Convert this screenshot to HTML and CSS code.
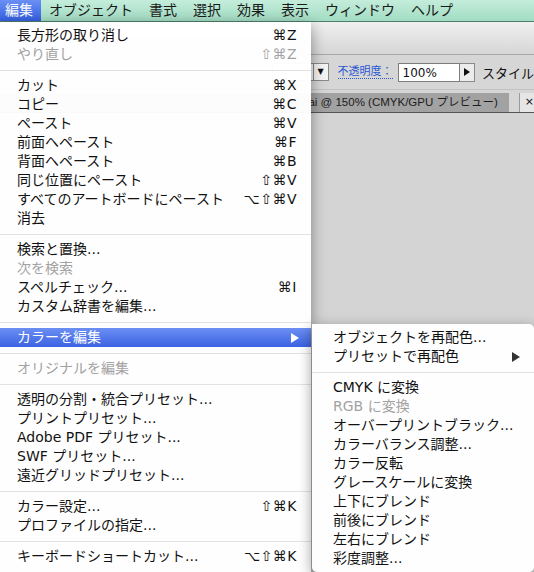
FILE: index.html
```html
<!DOCTYPE html>
<html>
<head>
    <title>編集メニュー</title>
    <link rel="stylesheet" href="styles.css">
</head>
<body>
    <div class="menubar">
        <span class="menubar-item is-open">編集</span>
        <span class="menubar-item">オブジェクト</span>
        <span class="menubar-item">書式</span>
        <span class="menubar-item">選択</span>
        <span class="menubar-item">効果</span>
        <span class="menubar-item">表示</span>
        <span class="menubar-item">ウィンドウ</span>
        <span class="menubar-item">ヘルプ</span>
    </div>

    <div class="app">
        <div class="titlebar"></div>
        <div class="controlbar">
            <span class="select"><span class="select-arrow">▼</span></span>
            <span class="opacity-label">不透明度：</span>
            <span class="field">100%</span>
            <span class="field-btn">
                <svg width="6" height="8" viewBox="0 0 6 8"><polygon points="0,0 6,4 0,8" fill="#111"/></svg>
            </span>
            <span class="style-label">スタイル</span>
        </div>
        <div class="tabbar">
            <span class="tab">ai @ 150% (CMYK/GPU プレビュー)</span>
            <span class="tab-close">×</span>
        </div>
        <div class="canvas"></div>
    </div>

    <!-- edit menu -->
    <div class="menu menu-edit">
        <div class="menu-item"><span>長方形の取り消し</span><span class="key">⌘Z</span></div>
        <div class="menu-item is-disabled"><span>やり直し</span><span class="key">⇧⌘Z</span></div>
        <div class="menu-sep"></div>
        <div class="menu-item"><span>カット</span><span class="key">⌘X</span></div>
        <div class="menu-item"><span>コピー</span><span class="key">⌘C</span></div>
        <div class="menu-item"><span>ペースト</span><span class="key">⌘V</span></div>
        <div class="menu-item"><span>前面へペースト</span><span class="key">⌘F</span></div>
        <div class="menu-item"><span>背面へペースト</span><span class="key">⌘B</span></div>
        <div class="menu-item"><span>同じ位置にペースト</span><span class="key">⇧⌘V</span></div>
        <div class="menu-item"><span>すべてのアートボードにペースト</span><span class="key">⌥⇧⌘V</span></div>
        <div class="menu-item"><span>消去</span></div>
        <div class="menu-sep"></div>
        <div class="menu-item"><span>検索と置換...</span></div>
        <div class="menu-item is-disabled"><span>次を検索</span></div>
        <div class="menu-item"><span>スペルチェック...</span><span class="key">⌘I</span></div>
        <div class="menu-item"><span>カスタム辞書を編集...</span></div>
        <div class="menu-sep"></div>
        <div class="menu-item is-active">
            <span>カラーを編集</span>
            <svg class="arrow" width="8" height="10" viewBox="0 0 8 10"><polygon points="0,0 8,5 0,10" fill="#fff"/></svg>
        </div>
        <div class="menu-sep"></div>
        <div class="menu-item is-disabled"><span>オリジナルを編集</span></div>
        <div class="menu-sep"></div>
        <div class="menu-item"><span>透明の分割・統合プリセット...</span></div>
        <div class="menu-item"><span>プリントプリセット...</span></div>
        <div class="menu-item"><span>Adobe PDF プリセット...</span></div>
        <div class="menu-item"><span>SWF プリセット...</span></div>
        <div class="menu-item"><span>遠近グリッドプリセット...</span></div>
        <div class="menu-sep"></div>
        <div class="menu-item"><span>カラー設定...</span><span class="key">⇧⌘K</span></div>
        <div class="menu-item"><span>プロファイルの指定...</span></div>
        <div class="menu-sep"></div>
        <div class="menu-item"><span>キーボードショートカット...</span><span class="key">⌥⇧⌘K</span></div>
    </div>

    <!-- color submenu -->
    <div class="menu submenu">
        <div class="menu-item"><span>オブジェクトを再配色...</span></div>
        <div class="menu-item">
            <span>プリセットで再配色</span>
            <svg class="arrow" width="8" height="10" viewBox="0 0 8 10"><polygon points="0,0 8,5 0,10" fill="#333"/></svg>
        </div>
        <div class="menu-sep"></div>
        <div class="menu-item"><span>CMYK に変換</span></div>
        <div class="menu-item is-disabled"><span>RGB に変換</span></div>
        <div class="menu-item"><span>オーバープリントブラック...</span></div>
        <div class="menu-item"><span>カラーバランス調整...</span></div>
        <div class="menu-item"><span>カラー反転</span></div>
        <div class="menu-item"><span>グレースケールに変換</span></div>
        <div class="menu-item"><span>上下にブレンド</span></div>
        <div class="menu-item"><span>前後にブレンド</span></div>
        <div class="menu-item"><span>左右にブレンド</span></div>
        <div class="menu-item"><span>彩度調整...</span></div>
    </div>
</body>
</html>
```

FILE: styles.css
```css
body {
    margin: 0;
    font-family: "DejaVu Sans", "Noto Sans CJK JP", sans-serif;
    font-size: 14px;
    color: #111;
    background: #d4d4d4;
    overflow: hidden;
    height: 572px;
}
.menubar {
    display: flex;
    height: 21px;
    line-height: 21px;
    background: linear-gradient(#c4eddb, #a2dcc3);
    border-bottom: 1px solid #4f7f6a;
}
.menubar-item {
    padding: 0 8px;
    color: #1a1a1a;
}
.menubar-item.is-open {
    padding-left: 5px;
    color: #fff;
    background: linear-gradient(#6a8ff4, #3560e2);
}

/* application window behind the menus */
.app {
    display: flex;
    flex-direction: column;
}
.titlebar {
    height: 32px;
    background: linear-gradient(#f0f0f0, #d6d6d6);
    border-bottom: 1px solid #a9a9a9;
}
.controlbar {
    display: flex;
    align-items: center;
    height: 34px;
    padding-left: 272px;
    background: #d6d6d6;
    border-bottom: 1px solid #c2c2c2;
    white-space: nowrap;
}
.select {
    display: flex;
    justify-content: flex-end;
    align-items: center;
    width: 60px;
    height: 18px;
    box-sizing: border-box;
    background: #f4f4f4;
    border: 1px solid #8a8a8a;
}
.select-arrow {
    width: 14px;
    font-size: 8px;
    text-align: center;
    border-left: 1px solid #8a8a8a;
    line-height: 16px;
}
.opacity-label {
    margin-left: 9px;
    font-size: 11px;
    color: #2957d4;
    border-bottom: 1px dotted #2957d4;
    line-height: 13px;
    white-space: nowrap;
}
.field {
    margin-left: 5px;
    width: 66px;
    height: 19px;
    box-sizing: border-box;
    padding-left: 4px;
    background: #fff;
    border: 1px solid #7c7c7c;
    font-size: 12px;
    line-height: 18px;
}
.field-btn {
    display: flex;
    align-items: center;
    justify-content: center;
    width: 16px;
    height: 19px;
    box-sizing: border-box;
    background: #ececec;
    border: 1px solid #8a8a8a;
    border-left: none;
}
.style-label {
    margin-left: 7px;
    font-size: 13px;
    white-space: nowrap;
}
.tabbar {
    display: flex;
    align-items: stretch;
    height: 19px;
    padding-top: 3px;
    background: #d6d6d6;
    border-bottom: 1px solid #555;
}
.tab {
    width: 513px;
    box-sizing: border-box;
    padding-right: 11px;
    text-align: right;
    font-family: "Liberation Sans", "Noto Sans CJK JP", sans-serif;
    font-size: 11.5px;
    line-height: 18px;
    background: #a2a2a2;
    color: #1c1c1c;
    white-space: nowrap;
}
.tab-close {
    margin-left: 10px;
    flex: 1;
    padding-left: 5px;
    font-size: 11px;
    line-height: 18px;
    background: #e6e6e6;
    border-left: 1px solid #9a9a9a;
}
.canvas {
    flex: 1;
    height: 460px;
    background: #d5d5d5;
}

/* menus */
.menu {
    position: absolute;
    box-sizing: border-box;
    padding: 4px 0;
    background: rgba(255, 255, 255, 0.97);
    box-shadow: 0 4px 14px rgba(0, 0, 0, 0.4);
}
.menu-edit {
    left: 0;
    top: 22px;
    width: 311px;
    height: 560px;
}
.submenu {
    left: 312px;
    top: 324px;
    width: 222px;
    border-radius: 0 5px 5px 5px;
}
.menu-item {
    display: flex;
    justify-content: space-between;
    align-items: center;
    height: 19px;
    line-height: 19px;
    padding: 0 14px 0 17px;
    white-space: nowrap;
}
.submenu .menu-item {
    padding: 0 14px 0 21px;
}
.menu-item.is-disabled {
    color: #a2a2a2;
}
.menu-item.is-active {
    color: #fff;
    background: linear-gradient(#6c8ff3, #3b62e3);
    padding-right: 12px;
}
.key {
    letter-spacing: 0.5px;
}
.menu-sep {
    height: 1px;
    margin: 6px 0 5px;
    background: #e2e2e2;
}
```
